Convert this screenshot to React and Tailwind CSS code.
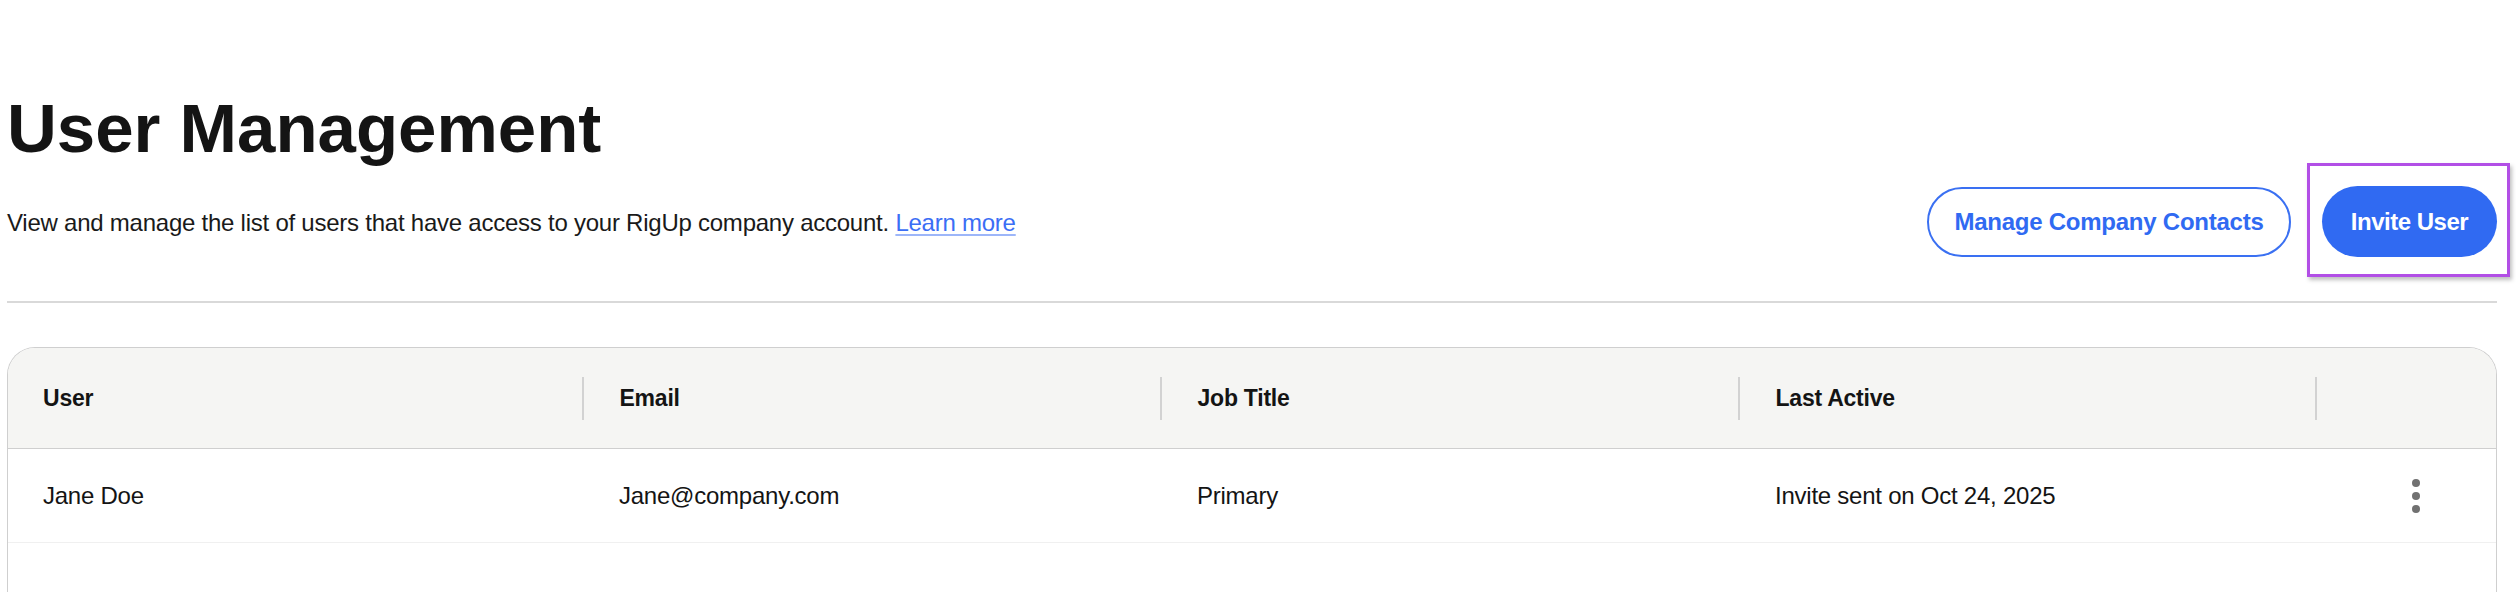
const users = [
  { name: "Jane Doe", email: "Jane@company.com", title: "Primary", lastActive: "Invite sent on Oct 24, 2025" },
];

const columns = ["User", "Email", "Job Title", "Last Active", ""];

function Kebab() {
  return (
    <button className="flex flex-col items-center gap-[5px] p-1" aria-label="More actions">
      <span className="h-[8px] w-[8px] rounded-full bg-[#717171]" />
      <span className="h-[8px] w-[8px] rounded-full bg-[#717171]" />
      <span className="h-[8px] w-[8px] rounded-full bg-[#717171]" />
    </button>
  );
}

export default function App() {
  return (
    <div className="h-[592px] overflow-hidden bg-white pl-[7px] pr-[19px] pt-[94px] font-['Liberation_Sans',Arial,sans-serif] text-[#141414]">
      <h1 className="text-[69px] leading-[69px] font-bold">User Management</h1>

      <div className="mt-[23px] flex items-center justify-between">
        <p className="pt-[2px] text-[24px] leading-[24px] tracking-[-0.01em] text-[#1a1a1a]">
          View and manage the list of users that have access to your RigUp company account.{" "}
          <a href="#" className="text-[#3b6ef5] underline decoration-[#9db6f9] decoration-2 underline-offset-[3px]">
            Learn more
          </a>
        </p>
        <div className="flex items-center gap-[31px]">
          <button className="flex h-[70px] w-[364px] items-center justify-center rounded-full border-2 border-[#3a70f2] text-[24px] font-bold tracking-[-0.01em] text-[#306af2]">
            Manage Company Contacts
          </button>
          <div className="relative">
            <button className="flex h-[71px] w-[175px] items-center justify-center rounded-full bg-[#306af2] text-[24px] font-bold tracking-[-0.02em] text-white">
              Invite User
            </button>
            <span className="pointer-events-none absolute -top-[23px] -right-[13px] -bottom-[20px] -left-[15px] border-[3px] border-[#b24fe6] shadow-[2px_3px_4px_rgba(0,0,0,0.25)]" />
          </div>
        </div>
      </div>

      <div className="mt-[44px] h-[2px] bg-[#d9d9d9]" />

      <div className="mt-[44px] overflow-hidden rounded-t-[28px] border border-b-0 border-[#cfcfcf]">
        <div className="grid h-[101px] grid-cols-[574px_578px_578px_577px_1fr] items-center border-b border-[#cfcfcf] bg-[#f5f5f3] text-[23px] leading-[23px] font-bold tracking-[-0.01em]">
          {columns.map((col, i) =>
            i === 0 ? (
              <div key={i} className="pl-[35px]">{col}</div>
            ) : (
              <div key={i} className="flex items-center">
                <span className="h-[43px] w-[1.5px] bg-[#d2d2d2]" />
                <span className="pl-[36px]">{col}</span>
              </div>
            )
          )}
        </div>

        {users.map((u) => (
          <div
            key={u.email}
            className="grid h-[94px] grid-cols-[574px_578px_578px_577px_1fr] items-center border-b border-[#f0f0f0] text-[24px] leading-[24px] tracking-[-0.01em]"
          >
            <div className="pl-[35px]">{u.name}</div>
            <div className="pl-[37px]">{u.email}</div>
            <div className="pl-[37px]">{u.title}</div>
            <div className="pl-[37px]">{u.lastActive}</div>
            <div className="flex pl-[93px]">
              <Kebab />
            </div>
          </div>
        ))}
        <div className="h-[94px]" />
      </div>
    </div>
  );
}
